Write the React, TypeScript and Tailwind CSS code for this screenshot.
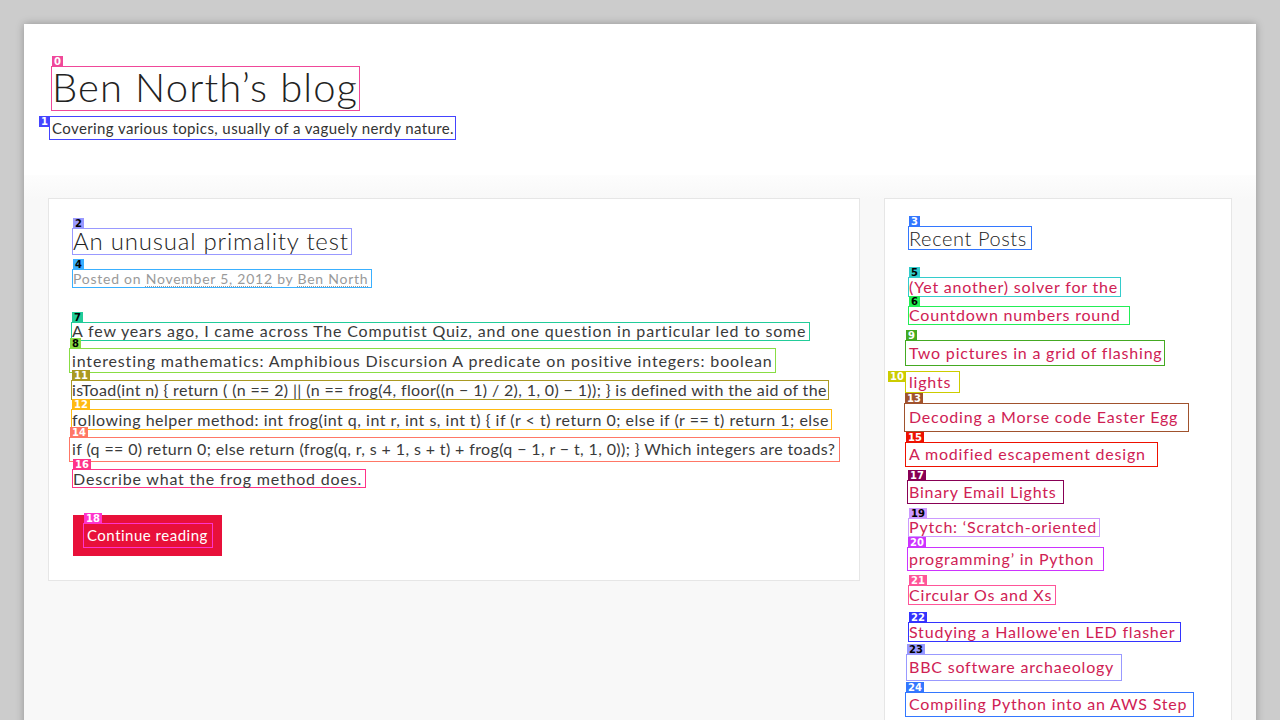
import type { ReactNode } from 'react';

type MarkProps = {
  n: number;
  line: string;
  badge: string;
  ink?: string;
  pos?: string;
  className?: string;
  children: ReactNode;
};

// overlay box with a small numbered tag
const Mark = ({ n, line, badge, ink = 'text-white', pos = 'left-0 -top-[11px]', className = '', children }: MarkProps) => (
  <span className={`relative flex shrink-0 items-center whitespace-nowrap border ${line} ${className}`}>
    <span
      className={`absolute ${pos} ${badge} ${ink} h-[11px] px-[2px] text-center font-['DejaVu_Sans',sans-serif] text-[10px] font-bold leading-[11px] tracking-normal`}
    >
      {n}
    </span>
    {children}
  </span>
);

const Row = ({ h, children }: { h: string; children: ReactNode }) => (
  <div className={h}>
    <div className="flex h-[30px] items-center">{children}</div>
  </div>
);

const link = 'text-[#cf2154]';

const App = () => {
  return (
    <div className="min-h-screen bg-[#cccccc] px-6 pt-6 font-['Lato',sans-serif] text-[#3a3a3a]">
      <div className="bg-white shadow-[0_0_8px_rgba(0,0,0,0.28)]">
        {/* Header */}
        <header className="h-[151px] pl-[25px] pt-[42px]">
          <Mark n={0} line="border-[#f0489a]" badge="bg-[#f0489a]" className="ml-[2px] h-[45px] w-[309px] pb-[3px]">
            <span className="font-light text-[40px] leading-[36px] text-[#222] tracking-[1.1px]">Ben North’s blog</span>
          </Mark>
          <Mark
            n={1}
            line="border-[#4444ff]"
            badge="bg-[#4444ff]"
            pos="right-full -top-[1px]"
            className="mt-[5px] h-[24px] w-[407px] pl-[2px]"
          >
            <span className="text-[15px] text-[#333] tracking-[0.4px]">Covering various topics, usually of a vaguely nerdy nature.</span>
          </Mark>
        </header>

        {/* Content */}
        <div className="flex gap-6 bg-[linear-gradient(to_bottom,#fdfdfd,#f8f8f8_24px)] px-6 pt-[23px]">
          <main className="h-[383px] w-[812px] shrink-0 border border-[#e6e6e6] bg-white pl-[23px] pt-[29px]">
            <Mark n={2} line="border-[#9999ff]" badge="bg-[#9999ff]" ink="text-black" className="h-[27px] w-[280px] pb-[2px]">
              <span className="font-light text-[24px] leading-[22px] text-[#222] tracking-[0.8px]">An unusual primality test</span>
            </Mark>
            <Mark n={4} line="border-[#3ab0ff]" badge="bg-[#3ab0ff]" ink="text-black" className="mt-[14px] h-[19px] w-[300px]">
              <span className="text-[14px] text-[#9a9a9a] tracking-[0.75px]">
                Posted on <span className="underline decoration-dotted decoration-1 underline-offset-2">November 5, 2012</span> by{' '}
                <span className="underline decoration-dotted decoration-1 underline-offset-2">Ben North</span>
              </span>
            </Mark>

            <div className="mt-[28px] text-[16px]">
              <Row h="h-[29.6px]">
                <Mark n={7} line="border-[#22cc99]" badge="bg-[#22cc99]" ink="text-black" className="-ml-px h-[19px] w-[739px] tracking-[0.82px]">
                  A few years ago, I came across The Computist Quiz, and one question in particular led to some
                </Mark>
              </Row>
              <Row h="h-[29.6px]">
                <Mark n={8} line="border-[#88dd44]" badge="bg-[#88dd44]" ink="text-black" className="-ml-[3px] h-[25px] w-[707px] pl-[2px] tracking-[0.85px]">
                  interesting mathematics: Amphibious Discursion A predicate on positive integers: boolean
                </Mark>
              </Row>
              <Row h="h-[29.6px]">
                <Mark n={11} line="border-[#aa9922]" badge="bg-[#aa9922]" className="-ml-px h-[20px] w-[758px] tracking-[0.37px]">
                  isToad(int n) {'{'} return ( (n == 2) || (n == frog(4, floor((n − 1) / 2), 1, 0) − 1)); {'}'} is defined with the aid of the
                </Mark>
              </Row>
              <Row h="h-[29.6px]">
                <Mark n={12} line="border-[#ffbb11]" badge="bg-[#ffbb11]" className="-ml-px h-[21px] w-[761px] tracking-[0.5px]">
                  following helper method: int frog(int q, int r, int s, int t) {'{'} if (r &lt; t) return 0; else if (r == t) return 1; else
                </Mark>
              </Row>
              <Row h="h-[29.6px]">
                <Mark n={14} line="border-[#ff7766]" badge="bg-[#ff7766]" className="-ml-[3px] h-[25px] w-[771px] pl-[2px] tracking-[0.38px]">
                  if (q == 0) return 0; else return (frog(q, r, s + 1, s + t) + frog(q − 1, r − t, 1, 0)); {'}'} Which integers are toads?
                </Mark>
              </Row>
              <Row h="h-[29.6px]">
                <Mark n={16} line="border-[#ff3388]" badge="bg-[#ff3388]" className="h-[19px] w-[294px] tracking-[0.82px]">
                  Describe what the frog method does.
                </Mark>
              </Row>
            </div>

            <div className="ml-px mt-[21px] flex h-[41px] w-[149px] items-center bg-[#e8103a] pl-[10px]">
              <Mark n={18} line="border-[#ff33cc]" badge="bg-[#ff33cc]" className="h-[25px] w-[130px] pl-[3px]">
                <span className="text-[15px] text-white tracking-[0.5px]">Continue reading</span>
              </Mark>
            </div>
          </main>

          <aside className="h-[560px] w-[348px] shrink-0 border border-[#e6e6e6] bg-white pl-[23px] pt-[27px]">
            <Mark n={3} line="border-[#3377ff]" badge="bg-[#3377ff]" className="h-[24px] w-[124px] pb-px">
              <span className="font-light text-[20px] leading-none text-[#222] tracking-[0.6px]">Recent Posts</span>
            </Mark>

            <ul className={`mt-[21.5px] text-[16px] tracking-[0.8px] ${link}`}>
              <li>
                <Row h="h-[28.5px]">
                  <Mark n={5} line="border-[#33cccc]" badge="bg-[#33cccc]" ink="text-black" className="h-[20px] w-[213px]">
                    (Yet another) solver for the
                  </Mark>
                </Row>
                <Row h="h-[37.5px]">
                  <Mark n={6} line="border-[#22ee55]" badge="bg-[#22ee55]" ink="text-black" className="h-[19px] w-[222px]">
                    Countdown numbers round
                  </Mark>
                </Row>
              </li>
              <li>
                <Row h="h-[29px]">
                  <Mark n={9} line="border-[#44aa22]" badge="bg-[#44aa22]" className="-ml-[3px] h-[26px] w-[260px] pl-[3px]">
                    Two pictures in a grid of flashing
                  </Mark>
                </Row>
                <Row h="h-[35.5px]">
                  <Mark
                    n={10}
                    line="border-[#cccc00]"
                    badge="bg-[#cccc00]"
                    pos="right-full -top-px"
                    className="-ml-[3px] h-[22px] w-[55px] pl-[3px]"
                  >
                    lights
                  </Mark>
                </Row>
              </li>
              <li>
                <Row h="h-[37px]">
                  <Mark n={13} line="border-[#a0522d]" badge="bg-[#a0522d]" className="-ml-[4px] h-[29px] w-[285px] pl-[4px]">
                    Decoding a Morse code Easter Egg
                  </Mark>
                </Row>
              </li>
              <li>
                <Row h="h-[37.5px]">
                  <Mark n={15} line="border-[#ee1100]" badge="bg-[#ee1100]" className="-ml-[3px] h-[25px] w-[253px] pl-[3px]">
                    A modified escapement design
                  </Mark>
                </Row>
              </li>
              <li>
                <Row h="h-[35.5px]">
                  <Mark n={17} line="border-[#880055]" badge="bg-[#880055]" className="-ml-px h-[24px] w-[157px] pl-px">
                    Binary Email Lights
                  </Mark>
                </Row>
              </li>
              <li>
                <Row h="h-[31.5px]">
                  <Mark n={19} line="border-[#cc99ff]" badge="bg-[#cc99ff]" ink="text-black" className="h-[19px] w-[192px]">
                    Pytch: ‘Scratch-oriented
                  </Mark>
                </Row>
                <Row h="h-[36px]">
                  <Mark n={20} line="border-[#cc33ff]" badge="bg-[#cc33ff]" className="-ml-px h-[24px] w-[197px] pl-px">
                    programming’ in Python
                  </Mark>
                </Row>
              </li>
              <li>
                <Row h="h-[37px]">
                  <Mark n={21} line="border-[#ff5599]" badge="bg-[#ff5599]" className="h-[20px] w-[148px]">
                    Circular Os and Xs
                  </Mark>
                </Row>
              </li>
              <li>
                <Row h="h-[35.5px]">
                  <Mark n={22} line="border-[#3333ff]" badge="bg-[#3333ff]" className="h-[20px] w-[273px]">
                    Studying a Hallowe'en LED flasher
                  </Mark>
                </Row>
              </li>
              <li>
                <Row h="h-[37px]">
                  <Mark n={23} line="border-[#9999ff]" badge="bg-[#9999ff]" ink="text-black" className="-ml-[2px] h-[27px] w-[216px] pl-[2px]">
                    BBC software archaeology
                  </Mark>
                </Row>
              </li>
              <li>
                <Row h="h-[30px]">
                  <Mark n={24} line="border-[#3377ff]" badge="bg-[#3377ff]" className="-ml-[3px] h-[25px] w-[289px] pl-[3px]">
                    Compiling Python into an AWS Step
                  </Mark>
                </Row>
              </li>
            </ul>
          </aside>
        </div>
      </div>
    </div>
  );
};

export default App;
